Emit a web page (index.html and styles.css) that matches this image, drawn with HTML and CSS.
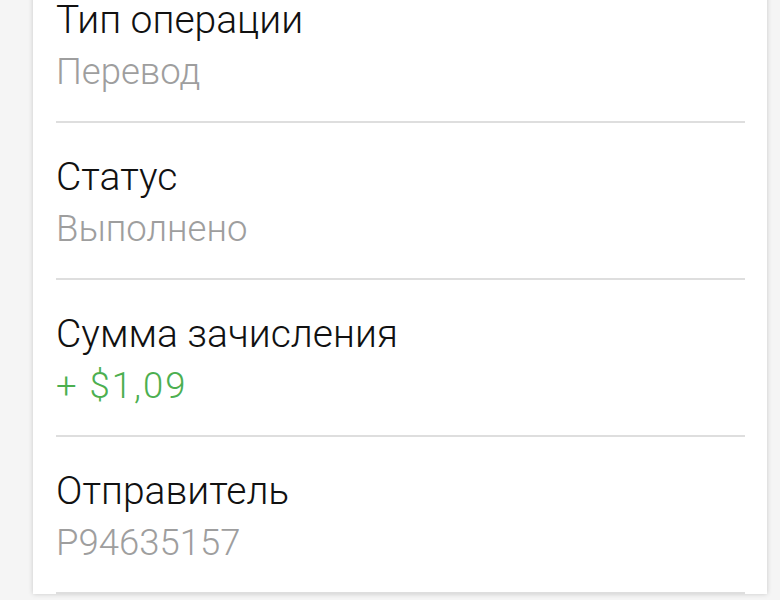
FILE: index.html
```html
<!DOCTYPE html>
<html lang="ru">
<head>
  <meta charset="UTF-8" />
  <meta name="viewport" content="width=device-width, initial-scale=1.0"/>
  <title>Детали операции</title>
  <link rel="stylesheet" href="styles.css">
</head>
<body>
  <div class="card">
    <div class="row">
      <div class="label">Тип операции</div>
      <div class="value">Перевод</div>
    </div>
    <div class="row">
      <div class="label">Статус</div>
      <div class="value">Выполнено</div>
    </div>
    <div class="row">
      <div class="label">Сумма зачисления</div>
      <div class="value green">+ $1,09</div>
    </div>
    <div class="row">
      <div class="label">Отправитель</div>
      <div class="value">P94635157</div>
    </div>
  </div>
</body>
</html>
```

FILE: styles.css
```css
body {
  font-family: Roboto, 'Noto Sans', sans-serif;
  font-weight: 300;
  margin: 0;
  background-color: #f5f5f5;
  height: 600px;
  overflow: hidden;
}
.card {
  margin: -34px 13px 0 33px;
  background-color: white;
  box-shadow: 0 0 5px rgba(0, 0, 0, 0.18);
  padding: 0 22px 0 23px;
}
.row {
  padding: 30px 0 25px;
  border-bottom: 2px solid #dedede;
}
.label {
  font-size: 39px;
  line-height: 48px;
  color: #111;
}
.value {
  margin-top: 4px;
  font-size: 36.5px;
  line-height: 48px;
  color: #9e9e9e;
}
.value.green {
  color: #4caf50;
  letter-spacing: 2px;
}
```
